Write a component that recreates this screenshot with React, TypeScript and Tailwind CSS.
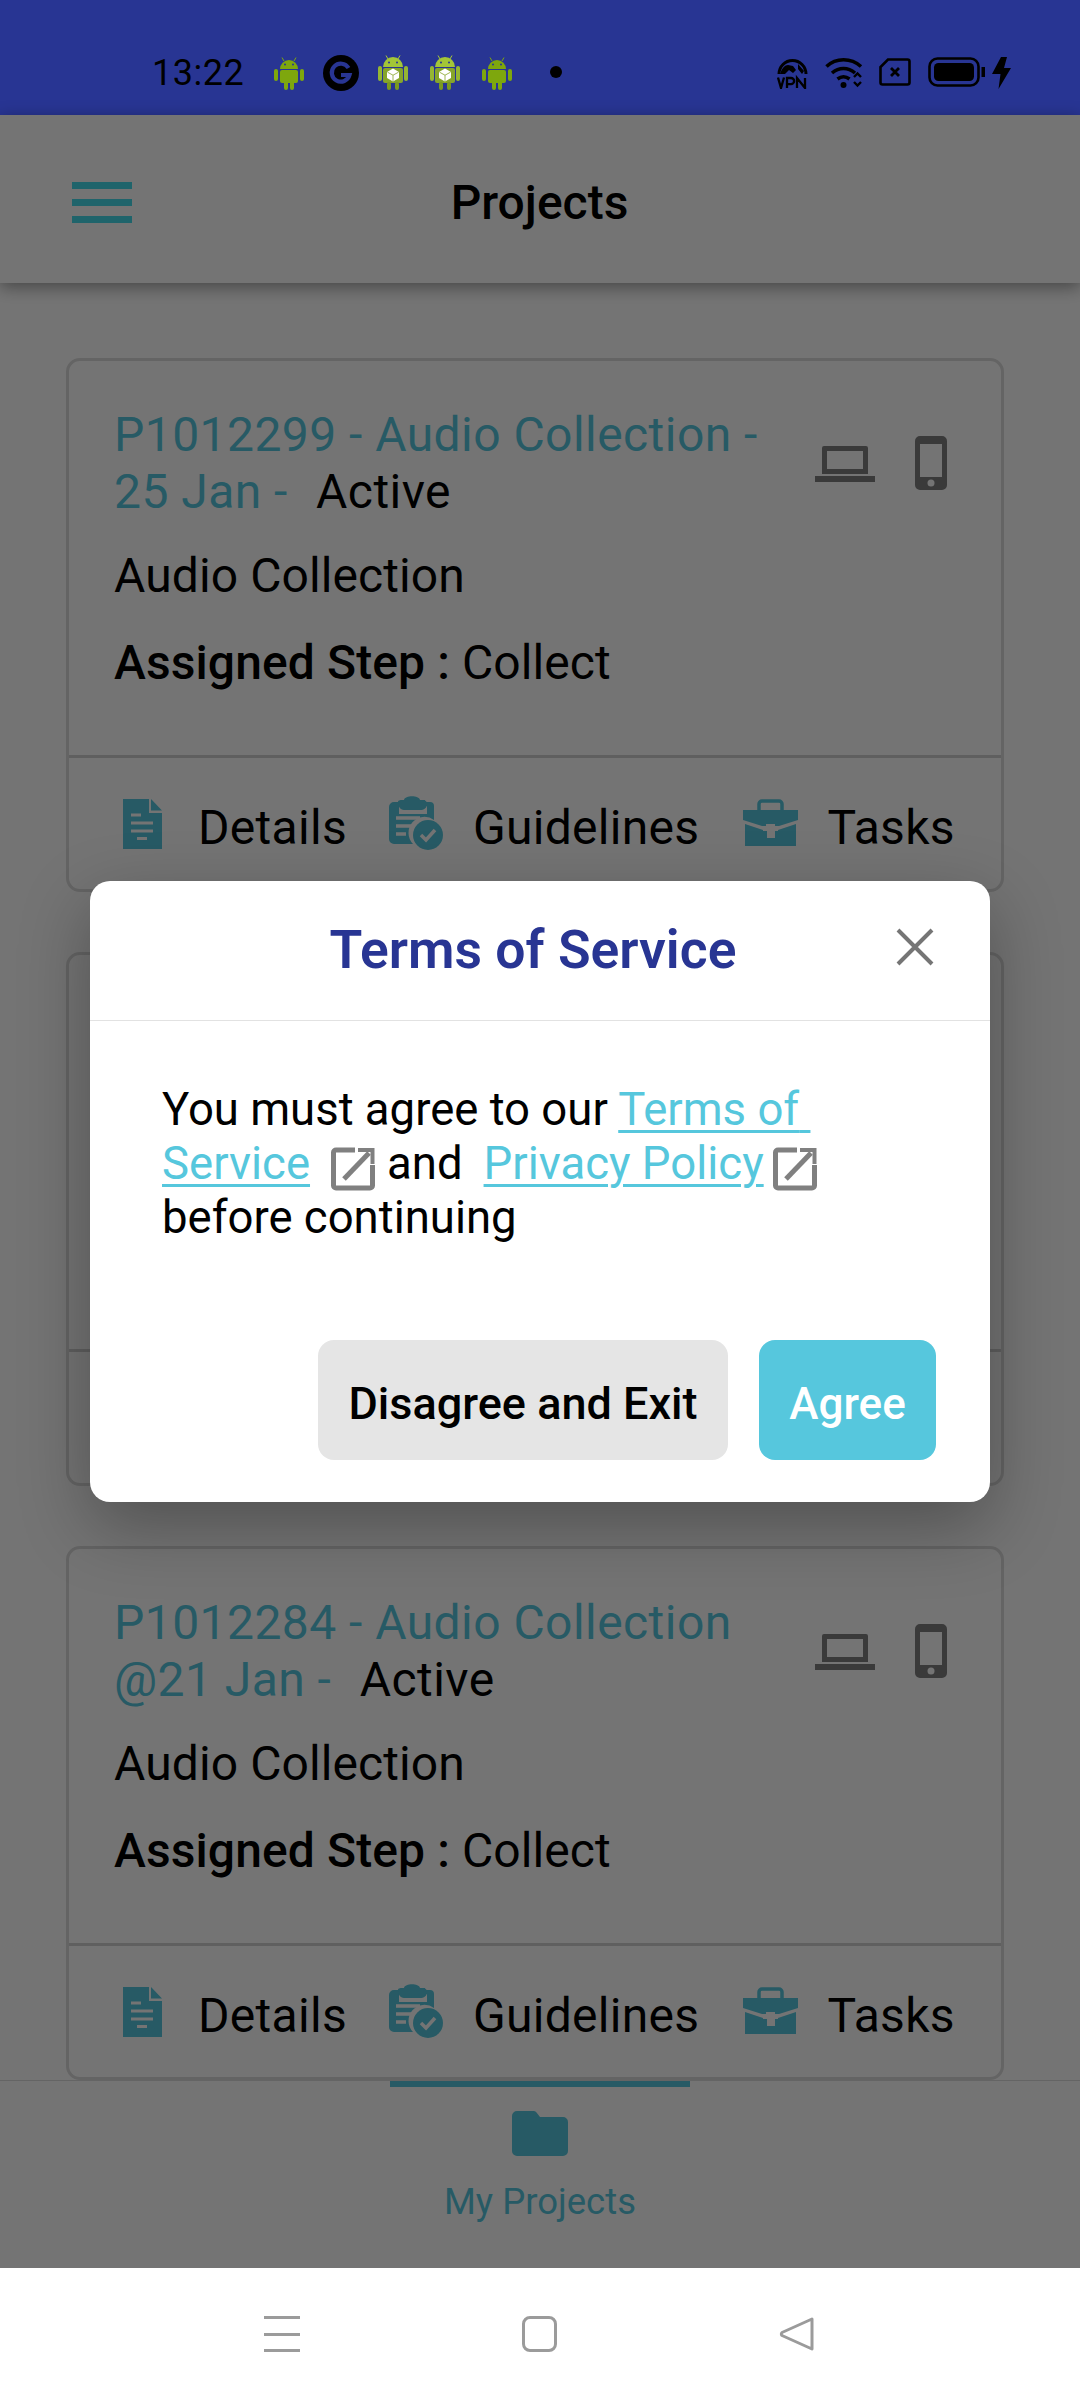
import React from "react";

const Android = () => (
  <svg width="30" height="33" viewBox="0 0 30 33" className="block">
    <path d="M8 0.5 10 4M22 0.5 20 4" stroke="#7ea70d" strokeWidth="1" />
    <path d="M6 12a9 9 0 0 1 18 0z" fill="#7ea70d" />
    <circle cx="11" cy="7.5" r="1" fill="#283593" />
    <circle cx="19" cy="7.5" r="1" fill="#283593" />
    <rect x="6" y="13" width="18" height="13" rx="2" fill="#7ea70d" />
    <rect x="0" y="12" width="4" height="12" rx="2" fill="#7ea70d" />
    <rect x="26" y="12" width="4" height="12" rx="2" fill="#7ea70d" />
    <rect x="10" y="24" width="4" height="9" rx="2" fill="#7ea70d" />
    <rect x="16" y="24" width="4" height="9" rx="2" fill="#7ea70d" />
  </svg>
);

const AndroidBox = () => (
  <svg width="30" height="35" viewBox="0 0 30 35" className="block">
    <path d="M8 0.5 10 4M22 0.5 20 4" stroke="#a6c83a" strokeWidth="1" />
    <path d="M5 12a10 10 0 0 1 20 0z" fill="#a3c637" />
    <circle cx="11" cy="7.5" r="1" fill="#283593" />
    <circle cx="19" cy="7.5" r="1" fill="#283593" />
    <rect x="5" y="13" width="20" height="15" rx="2" fill="#86a52a" />
    <rect x="0" y="11" width="4" height="15" rx="2" fill="#95b633" />
    <rect x="26" y="11" width="4" height="15" rx="2" fill="#95b633" />
    <rect x="9" y="27" width="4" height="8" rx="2" fill="#7a9a22" />
    <rect x="17" y="27" width="4" height="8" rx="2" fill="#7a9a22" />
    <path d="M15 13.5 21 17v6l-6 3.5L9 23v-6z" fill="#fff" />
    <path d="M9.5 17.2 15 20.2l5.5-3M15 20.2V26" stroke="#86a52a" strokeWidth="0.8" fill="none" />
  </svg>
);

const GIcon = () => (
  <svg width="36" height="36" viewBox="0 0 36 36" className="block">
    <circle cx="18" cy="18" r="18" fill="#000" />
    <path d="M25.5 13a9 9 0 1 0 1 7H18" fill="none" stroke="#283593" strokeWidth="4.2" />
  </svg>
);

const Vpn = () => (
  <svg width="31" height="32" viewBox="0 0 31 32" className="block">
    <path d="M2 17a13.5 13.5 0 0 1 27 0" fill="none" stroke="#000" strokeWidth="3" />
    <path d="M3 17c2-6 5-9 8-9l5 1 3 4-3 3-4-3-4 4zM21 7l6 7-2 3-4-5z" fill="#000" />
    <path d="M1 20.500 4 31 7 20.500M10 31V21h4a3 3 0 0 1 0 6.200h-4M20 31V21l8 10V21" fill="none" stroke="#000" strokeWidth="2.300" />
  </svg>
);

const Wifi = () => (
  <svg width="39" height="31" viewBox="0 0 39 31" className="block">
    <path d="M1.500 9.500C11 .5 26 .5 36 9.500" fill="none" stroke="#000" strokeWidth="3.600" />
    <path d="M7 16c7-6 16-6 23 0" fill="none" stroke="#000" strokeWidth="3.600" />
    <path d="M12.500 22c4-3 8-3 12 0" fill="none" stroke="#000" strokeWidth="3.600" />
    <circle cx="18.500" cy="28" r="3" fill="#000" />
    <path d="M29 20l3.500-3.500L36 20M29 25l3.500 3.500L36 25" fill="none" stroke="#000" strokeWidth="2.400" />
  </svg>
);

const Sim = () => (
  <svg width="32" height="28" viewBox="0 0 32 28" className="block">
    <path d="M9 1.500h19.500a2 2 0 0 1 2 2v21a2 2 0 0 1-2 2h-25a2 2 0 0 1-2-2V9z" fill="none" stroke="#000" strokeWidth="2.600" />
    <path d="M12 10l8 8M20 10l-8 8" stroke="#000" strokeWidth="2.800" />
  </svg>
);

const Battery = () => (
  <svg width="57" height="30" viewBox="0 0 57 30" className="block">
    <rect x="1.500" y="1.500" width="49" height="27" rx="8" fill="none" stroke="#000" strokeWidth="2.600" />
    <rect x="6" y="6" width="40" height="18" rx="4.500" fill="#000" />
    <rect x="53.500" y="10" width="3.500" height="10" fill="#000" />
  </svg>
);

const Bolt = () => (
  <svg width="19" height="32" viewBox="0 0 19 32" className="block">
    <path d="M9 0h6l-3 11h7L6.500 32l2-15H0z" fill="#000" />
  </svg>
);

const ExternalLink = ({ className }: { className: string }) => (
  <svg width="44" height="44" viewBox="0 0 44 44" className={className}>
    <path d="M24 3H5a2.500 2.500 0 0 0-2.500 2.500v33A2.500 2.500 0 0 0 5 41h34a2.500 2.500 0 0 0 2.500-2.500V18" fill="none" stroke="#808080" strokeWidth="5" />
    <path d="M13 32 38 6" stroke="#808080" strokeWidth="5" fill="none" />
    <path d="M27 3h14.500v14" stroke="#808080" strokeWidth="4" fill="none" />
  </svg>
);

const Laptop = () => (
  <svg width="60" height="40" viewBox="0 0 60 40" className="block">
    <path d="M9 3h42a2 2 0 0 1 2 2v26H7V5a2 2 0 0 1 2-2zm3 5v18h36V8z" fill="#808080" fillRule="evenodd" />
    <rect x="0" y="33" width="60" height="6" fill="#808080" />
  </svg>
);

const Phone = () => (
  <svg width="32" height="54" viewBox="0 0 32 54" className="block">
    <path d="M5 0h22a5 5 0 0 1 5 5v44a5 5 0 0 1-5 5H5a5 5 0 0 1-5-5V5a5 5 0 0 1 5-5zm0 8v33h22V8z" fill="#808080" fillRule="evenodd" />
    <circle cx="16" cy="47" r="3.500" fill="#fff" />
  </svg>
);

const DocIcon = () => (
  <svg width="39" height="50" viewBox="0 0 39 50" className="block">
    <path d="M0 0h26v14h13v36H0z" fill="#56c7dd" />
    <path d="M28 0l11 11.500H28z" fill="#56c7dd" />
    <path d="M8 16h10M8 24h22M8 32h22M14 39.500h10" stroke="#fff" strokeWidth="3" />
  </svg>
);

const ClipboardIcon = () => (
  <svg width="54" height="54" viewBox="0 0 54 54" className="block">
    <path d="M5 6h7V4h24v2h5a4 4 0 0 1 4 4v14a16 16 0 0 0-21 24H5a5 5 0 0 1-5-5V11a5 5 0 0 1 5-5z" fill="#56c7dd" />
    <path d="M10 10h28v8H10z" fill="#fff" />
    <path d="M9 6c0-2 3-2 6-2 1-5 15-5 16 0 4 0 7 0 7 4 0 4-3 6-7 6H15c-4 0-6-4-6-8z" fill="#56c7dd" />
    <path d="M7 22h24M7 30h16M7 38h10" stroke="#fff" strokeWidth="3.500" />
    <circle cx="39" cy="39" r="15" fill="#56c7dd" />
    <path d="M32 39l5 5 9-10" fill="none" stroke="#fff" strokeWidth="3.500" />
  </svg>
);

const BriefcaseIcon = () => (
  <svg width="55" height="47" viewBox="0 0 55 47" className="block">
    <path d="M16 12V5a3 3 0 0 1 3-3h17a3 3 0 0 1 3 3v7" fill="none" stroke="#56c7dd" strokeWidth="3.500" />
    <path d="M0 11h55v10L36 27h-4v-2h-9v2h-4L0 21z" fill="#56c7dd" />
    <path d="M2 25l18 6v1h4v7h8v-7h3v-1l18-6v22H2z" fill="#56c7dd" />
  </svg>
);

const FolderIcon = () => (
  <svg width="56" height="45" viewBox="0 0 56 45" className="block">
    <path d="M5 0h17a3 3 0 0 1 2.500 1.500L28 6h23a5 5 0 0 1 5 5v29a5 5 0 0 1-5 5H5a5 5 0 0 1-5-5V5a5 5 0 0 1 5-5z" fill="#56c7dd" />
  </svg>
);

type CardProps = { title: React.ReactNode };

const Card = ({ title }: CardProps) => (
  <div className="flex h-[534px] w-[938px] shrink-0 flex-col rounded-[14px] border-[3px] border-[#dcdcdc]">
    <div className="flex h-[397px] shrink-0 items-start justify-between border-b-[3px] border-[#d0d0d0] pl-[45px] pr-[54px] pt-[45px]">
      <div>
        <div className="w-[660px] text-[48px] leading-[57px] tracking-[0.45px] text-[#56c7dd]">{title}</div>
        <div className="mt-[27px] text-[48px] leading-[57px] tracking-[0.1px] text-black">Audio Collection</div>
        <div className="mt-[30px] text-[48px] leading-[57px] tracking-[0.1px] text-black">
          <span className="font-medium">Assigned Step :</span> Collect
        </div>
      </div>
      <div className="mt-[30px] flex items-center gap-[40px]">
        <Laptop />
        <Phone />
      </div>
    </div>
    <div className="flex flex-1 items-start pl-[54px] pt-[41px] tracking-[0.3px]">
      <div className="w-[39px]"><DocIcon /></div>
      <span className="ml-[36px] text-[48px] leading-[57px] text-black">Details</span>
      <div className="ml-[42px] mt-[-3px]"><ClipboardIcon /></div>
      <span className="ml-[30px] text-[48px] leading-[57px] text-black">Guidelines</span>
      <div className="ml-[44px]"><BriefcaseIcon /></div>
      <span className="ml-[29px] text-[48px] leading-[57px] text-black">Tasks</span>
    </div>
  </div>
);

export default function App() {
  return (
    <div className="relative flex h-[2400px] w-[1080px] flex-col overflow-hidden bg-white font-['Roboto',sans-serif]">
      <div className="flex h-[115px] shrink-0 items-start justify-between bg-[#283593] pl-[152px] pr-[69px] pt-[55px]">
        <div className="flex items-start">
          <span className="text-[36px] leading-[36px] tracking-[0.5px] text-black">13:22</span>
          <div className="ml-[30px] mt-[2px]"><Android /></div>
          <div className="ml-[19px]"><GIcon /></div>
          <div className="ml-[19px]"><AndroidBox /></div>
          <div className="ml-[22px]"><AndroidBox /></div>
          <div className="ml-[22px] mt-[2px]"><Android /></div>
          <div className="ml-[38px] mt-[11px] h-[12px] w-[12px] rounded-full bg-black" />
        </div>
        <div className="mt-[2px] flex items-start">
          <Vpn />
          <div className="ml-[17px]"><Wifi /></div>
          <div className="ml-[15px] mt-[1px]"><Sim /></div>
          <div className="ml-[17px]"><Battery /></div>
          <div className="ml-[7px]"><Bolt /></div>
        </div>
      </div>

      <div className="relative flex min-h-0 flex-1 flex-col">
        <header className="relative z-10 flex h-[168px] shrink-0 items-center justify-center bg-white pt-[8px] shadow-[0_4px_16px_rgba(0,0,0,0.4)]">
          <div className="absolute left-[72px] top-[67px] flex w-[60px] flex-col gap-[10px]">
            <div className="h-[7px] bg-[#46dceb]" />
            <div className="h-[7px] bg-[#46dceb]" />
            <div className="h-[7px] bg-[#46dceb]" />
          </div>
          <h1 className="pr-[1px] text-[48px] font-medium leading-[56px] text-black">Projects</h1>
        </header>

        <main className="flex min-h-0 flex-1 flex-col items-start gap-[60px] overflow-hidden pl-[66px] pt-[75px]">
          <Card
            title={
              <>
                P1012299 - Audio Collection - 25 Jan - <span className="ml-[16px] text-black">Active</span>
              </>
            }
          />
          <Card
            title={
              <>
                P1012290 - Audio Collection - 24 Jan - <span className="ml-[16px] text-black">Active</span>
              </>
            }
          />
          <Card
            title={
              <>
                P1012284 - Audio Collection @21 Jan - <span className="ml-[16px] text-black">Active</span>
              </>
            }
          />
        </main>

        <nav className="flex h-[188px] shrink-0 flex-col items-center border-t border-[#dcdcdc] bg-white">
          <div className="h-[6px] w-[300px] bg-[#56c7dd]" />
          <div className="mt-[24px]"><FolderIcon /></div>
          <span className="mt-[25px] text-[36.5px] leading-[42px] text-[#56c7dd]">My Projects</span>
        </nav>

        <div className="absolute inset-0 z-20 flex items-center justify-center bg-black/[0.545]">
          <div className="flex h-[621px] w-[900px] flex-col rounded-[20px] bg-white shadow-[0_24px_70px_rgba(0,0,0,0.3)]">
            <div className="relative flex h-[140px] shrink-0 items-center justify-center border-b border-[#e2e2e2] pb-[2px] pr-[14px]">
              <h2 className="text-[53.5px] font-semibold leading-[60px] text-[#283593]">Terms of Service</h2>
              <svg width="38" height="38" viewBox="0 0 38 38" className="absolute right-[56px] top-[47px]">
                <path d="M2 2 36 36M36 2 2 36" stroke="#757575" strokeWidth="4" />
              </svg>
            </div>
            <div className="ml-[72px] mt-[62px] h-[180px] w-[720px] shrink-0 text-[45.5px] leading-[54px] text-black">
              You must agree to our{" "}
              <span className="text-[#56c7dd] underline decoration-[3px] underline-offset-[5px]">Terms of{"\u00A0"}<wbr />Service</span>
              <ExternalLink className="ml-[21px] inline-block align-[-12px]" />
              <span className="ml-[12px]">and</span>
              <span className="ml-[21px] text-[#56c7dd] underline decoration-[3px] underline-offset-[5px]">Privacy Policy</span>
              <ExternalLink className="ml-[9px] inline-block align-[-12px]" /> before continuing
            </div>
            <div className="mt-[77px] flex justify-end gap-[31px] pr-[54px]">
              <button className="flex h-[120px] w-[410px] items-center justify-center rounded-[16px] bg-[#e5e5e5] pt-[7px] text-[45px] font-medium text-black">
                Disagree and Exit
              </button>
              <button className="flex h-[120px] w-[177px] items-center justify-center rounded-[16px] bg-[#56c7dd] pt-[7px] text-[44px] font-medium text-white">
                Agree
              </button>
            </div>
          </div>
        </div>
      </div>

      <div className="flex h-[132px] shrink-0 items-start bg-white pt-[48px]">
        <div className="ml-[264px] flex h-[36px] w-[36px] flex-col justify-between">
          <div className="h-[3px] bg-[#9b9b9b]" />
          <div className="h-[3px] bg-[#9b9b9b]" />
          <div className="h-[3px] bg-[#9b9b9b]" />
        </div>
        <div className="ml-[222px] h-[36px] w-[35px] rounded-[8px] border-[3px] border-[#9b9b9b]" />
        <svg width="36" height="36" viewBox="0 0 36 36" className="ml-[222px] block">
          <path d="M33 3 3 16.500a2 2 0 0 0 0 3L33 33Z" fill="none" stroke="#9b9b9b" strokeWidth="3" strokeLinejoin="round" />
        </svg>
      </div>
    </div>
  );
}
